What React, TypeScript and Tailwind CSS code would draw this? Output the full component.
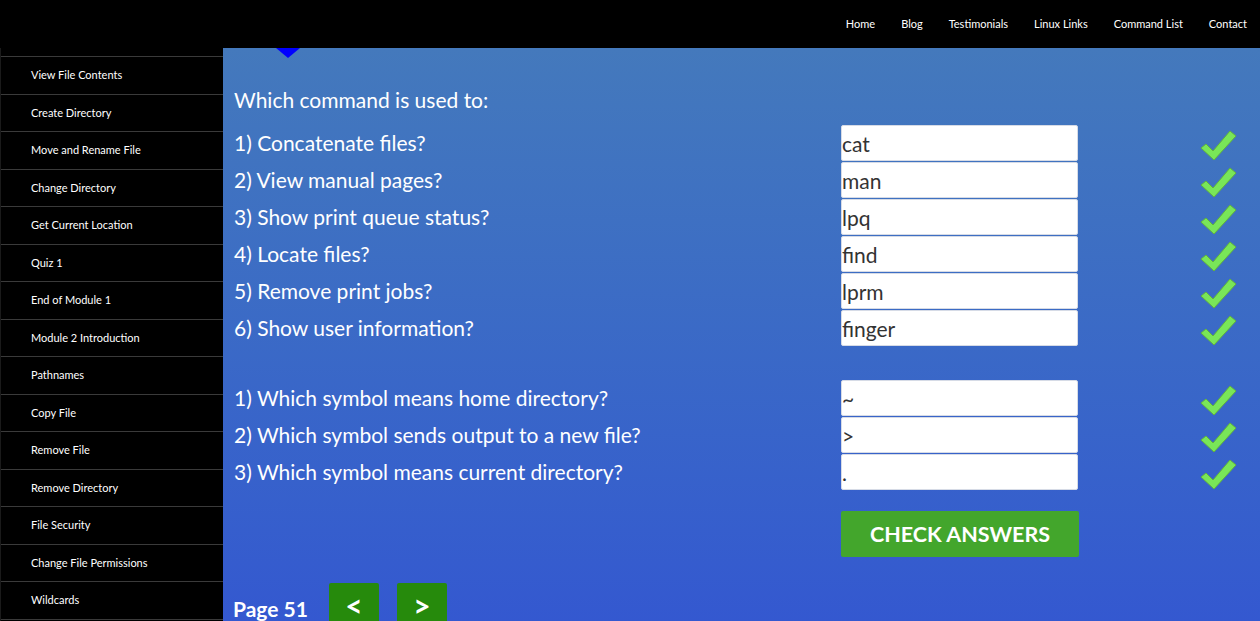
import React from "react";

const navLinks = ["Home", "Blog", "Testimonials", "Linux Links", "Command List", "Contact"];

const sideLinks = [
  "View File Contents",
  "Create Directory",
  "Move and Rename File",
  "Change Directory",
  "Get Current Location",
  "Quiz 1",
  "End of Module 1",
  "Module 2 Introduction",
  "Pathnames",
  "Copy File",
  "Remove File",
  "Remove Directory",
  "File Security",
  "Change File Permissions",
  "Wildcards",
];

const commandQs = [
  { q: "1) Concatenate files?", a: "cat" },
  { q: "2) View manual pages?", a: "man" },
  { q: "3) Show print queue status?", a: "lpq" },
  { q: "4) Locate files?", a: "find" },
  { q: "5) Remove print jobs?", a: "lprm" },
  { q: "6) Show user information?", a: "finger" },
];

const symbolQs = [
  { q: "1) Which symbol means home directory?", a: "~" },
  { q: "2) Which symbol sends output to a new file?", a: ">" },
  { q: "3) Which symbol means current directory?", a: "." },
];

function Check() {
  return (
    <svg width="37" height="31" viewBox="0 0 37 31" className="self-end ml-[122px]">
      <polygon
        points="1,18 6,14 13,21 30,1 36,6 14,30"
        fill="#79e658"
        stroke="#62b43c"
        strokeWidth="1"
        strokeLinejoin="round"
      />
    </svg>
  );
}

function QuestionRow({ q, a }: { q: string; a: string }) {
  return (
    <div className="flex h-[36px] items-center">
      <div className="w-[607px] text-[21px] text-white">{q}</div>
      <input
        readOnly
        value={a}
        className="h-[36px] w-[237px] rounded-[2px] border border-[#d6dbe6] bg-white text-[21px] text-[#333] outline-none"
      />
      <Check />
    </div>
  );
}

export default function App() {
  return (
    <div className="flex h-[621px] flex-col overflow-hidden bg-black font-[Lato,sans-serif]">
      {/* Top bar */}
      <header className="flex h-12 shrink-0 items-center justify-end bg-black">
        <ul className="flex">
          {navLinks.map((l) => (
            <li key={l} className="px-[13px] text-[11px] text-white">
              {l}
            </li>
          ))}
        </ul>
      </header>

      <div className="flex flex-1">
        {/* Sidebar */}
        <aside className="w-[223px] shrink-0 border-l border-[#1a1a1a] bg-black pt-2">
          <ul className="border-t border-[#3a3a3a]">
            {sideLinks.map((s) => (
              <li
                key={s}
                className="flex h-[37.5px] items-center border-b border-[#3a3a3a] pl-[30px] text-[11px] text-white"
              >
                {s}
              </li>
            ))}
          </ul>
        </aside>

        {/* Main */}
        <main className="relative flex-1 bg-gradient-to-b from-[#4479bc] to-[#3458d0] pl-[10px] pt-[38px]">
          <div className="absolute left-[53px] top-0 h-0 w-0 border-l-[12px] border-r-[12px] border-t-[10px] border-l-transparent border-r-transparent border-t-[#0000ff]" />

          <h2 className="h-[28px] pl-[1px] text-[21px] leading-[28px] text-white">Which command is used to:</h2>

          <div className="mt-[11px] flex flex-col gap-[1px] pl-[1px]">
            {commandQs.map((r) => (
              <QuestionRow key={r.q} {...r} />
            ))}
          </div>

          <div className="mt-[34px] flex flex-col gap-[1px] pl-[1px]">
            {symbolQs.map((r) => (
              <QuestionRow key={r.q} {...r} />
            ))}
          </div>

          <div className="mt-[21px] pl-[608px]">
            <button className="h-[46px] w-[238px] rounded-[2px] bg-[#43a62c] text-[21.5px] font-bold text-white">
              CHECK ANSWERS
            </button>
          </div>

          <div className="mt-[26px] flex items-start">
            <span className="mt-[12px] w-[96px] text-[21px] leading-[28px] font-bold text-white">Page 51</span>
            <button className="h-[38px] w-[50px] rounded-t-[2px] bg-[#268a0c] pt-[5px] text-[30px] leading-[30px] font-bold text-white">
              &lt;
            </button>
            <button className="ml-[18px] h-[38px] w-[50px] rounded-t-[2px] bg-[#268a0c] pt-[5px] text-[30px] leading-[30px] font-bold text-white">
              &gt;
            </button>
          </div>
        </main>
      </div>
    </div>
  );
}
